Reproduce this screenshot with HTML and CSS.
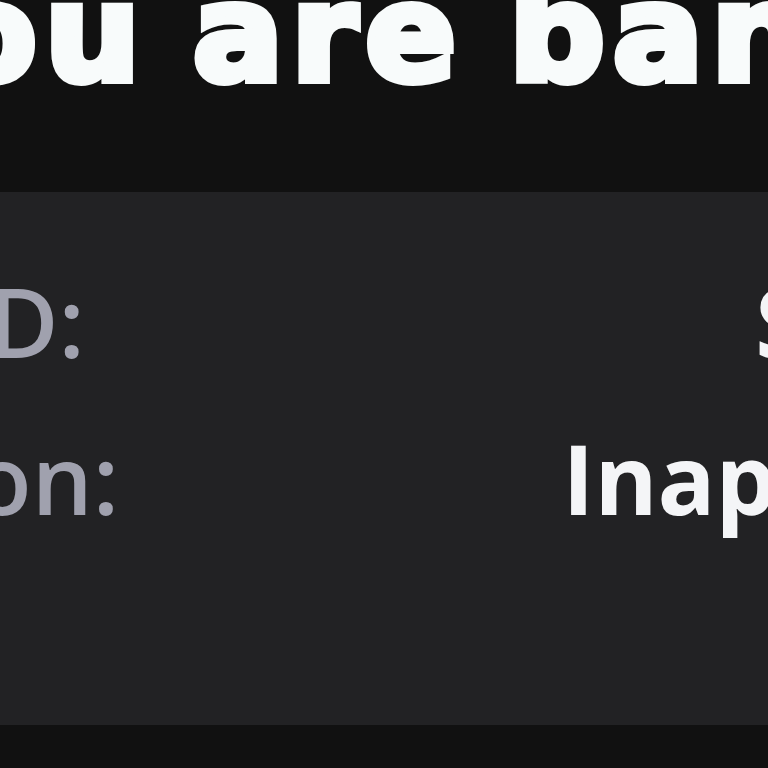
FILE: index.html
```html
<!DOCTYPE html>
<html lang="en">
<head>
  <meta charset="UTF-8" />
  <meta name="viewport" content="width=device-width, initial-scale=1.0"/>
  <title>Banned</title>
  <link rel="stylesheet" href="styles.css">
</head>
<body>
  <div class="screen">
    <h1 class="title">You are banned</h1>

    <div class="ban-card">
      <div class="ban-row">
        <span class="label">Ban ID:</span>
        <span class="value">S7F3-92K1</span>
      </div>
      <div class="ban-row">
        <span class="label">Reason:</span>
        <span class="value">Inappropriate</span>
      </div>
    </div>
  </div>
</body>
</html>
```

FILE: styles.css
```css
body {
  margin: 0;
  background-color: #111111;
  font-family: "Open Sans", "Noto Sans", sans-serif;
  overflow: hidden;
}

.screen {
  width: 1568px;
  margin-left: -320px;
}

.title {
  margin: -33px 0 0 172px;
  font-family: "DejaVu Sans", sans-serif;
  font-size: 134px;
  font-weight: 700;
  line-height: 1;
  letter-spacing: 8px;
  word-spacing: -10px;
  color: #f8fbfb;
  -webkit-text-stroke: 8px #f8fbfb;
  white-space: nowrap;
}

.ban-card {
  margin-top: 91px;
  height: 533px;
  box-sizing: border-box;
  padding: 81px 18px 0 74px;
  background-color: #222224;
  display: flex;
  flex-direction: column;
  gap: 61px;
}

.ban-row {
  display: flex;
  justify-content: space-between;
  font-size: 96px;
  line-height: 1;
  white-space: nowrap;
}

.label {
  color: #a0a1ae;
  font-weight: 600;
}

.value {
  color: #f4f5f7;
  font-weight: 700;
}
```
